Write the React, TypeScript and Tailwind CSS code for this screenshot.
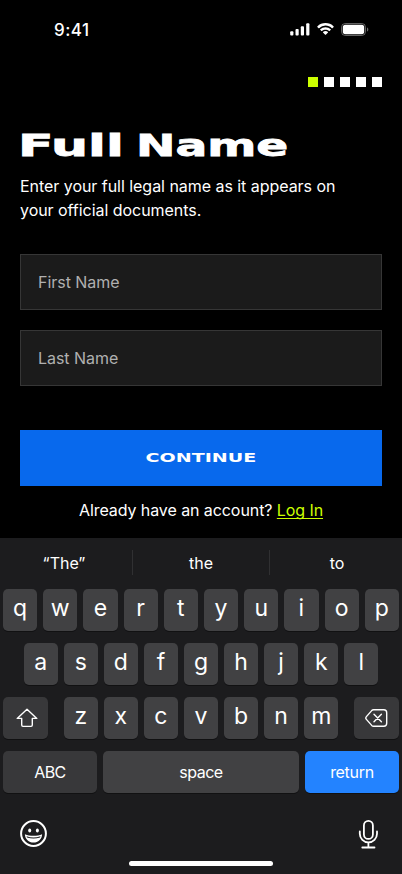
import type { ReactNode } from 'react';

const suggestions = ['“The”', 'the', 'to'];
const topRow = ['q', 'w', 'e', 'r', 't', 'y', 'u', 'i', 'o', 'p'];
const middleRow = ['a', 's', 'd', 'f', 'g', 'h', 'j', 'k', 'l'];
const bottomRow = ['z', 'x', 'c', 'v', 'b', 'n', 'm'];

function StatusBar() {
  return (
    <div className="flex h-[59px] items-center justify-between pl-[54px] pr-[33px]">
      <span className="text-[17px] font-[550] leading-[22px] tracking-[0.45px]">9:41</span>
      <div className="flex items-center">
        <svg width="20" height="13" viewBox="0 0 20 13" fill="currentColor">
          <rect x="0.2" y="8.3" width="3.2" height="4.2" rx="0.9" />
          <rect x="5.5" y="6" width="3.2" height="6.5" rx="0.9" />
          <rect x="10.8" y="3.3" width="3.2" height="9.2" rx="0.9" />
          <rect x="16.2" y="0.3" width="3.2" height="12.2" rx="0.9" />
        </svg>
        <svg className="ml-[7px]" width="17" height="13" viewBox="0 0 17 13" fill="currentColor">
          <path d="M8.5 2.6c2.4 0 4.7.9 6.4 2.6.1.1.3.1.5 0l1.3-1.3c.1-.1.1-.4 0-.5a11.8 11.8 0 0 0-16.4 0c-.1.1-.1.4 0 .5l1.3 1.3c.2.1.4.1.5 0a9.3 9.3 0 0 1 6.4-2.6Z" />
          <path d="M8.5 6.7c1.3 0 2.6.5 3.6 1.4.1.1.3.1.5 0l1.2-1.3c.2-.1.2-.4 0-.5a7.8 7.8 0 0 0-10.6 0c-.2.1-.2.4 0 .5l1.2 1.3c.2.1.4.1.5 0 1-.9 2.3-1.4 3.6-1.4Z" />
          <path d="M11 9.5c.1-.1.1-.4 0-.5a4 4 0 0 0-5 0c-.1.1-.1.4 0 .5l2.2 2.2c.2.2.4.2.6 0L11 9.5Z" />
        </svg>
        <svg className="ml-[7px]" width="28" height="13" viewBox="0 0 28 13" fill="none">
          <rect x="0.5" y="0.5" width="24" height="12" rx="3.8" stroke="currentColor" strokeOpacity="0.38" />
          <rect x="1.8" y="1.8" width="21.4" height="9.4" rx="2.6" fill="currentColor" />
          <path d="M26 4.5v4c.8-.3 1.3-1.1 1.3-2s-.5-1.7-1.3-2Z" fill="currentColor" fillOpacity="0.42" />
        </svg>
      </div>
    </div>
  );
}

function StepDots({ total, current }: { total: number; current: number }) {
  return (
    <div className="mt-[18px] flex justify-end gap-1.5 px-5">
      {Array.from({ length: total }, (_, i) => (
        <span key={i} className={i === current ? 'size-2.5 bg-[#ccff00]' : 'size-2.5 bg-white'} />
      ))}
    </div>
  );
}

function Field({ label }: { label: string }) {
  return (
    <input
      aria-label={label}
      className="h-14 w-full border border-[#363636] bg-[#1b1b1b] px-[17px] text-base tracking-[-0.04px] text-white outline-none placeholder:text-[#b0b0b0]"
      placeholder={label}
      type="text"
    />
  );
}

function LetterKey({ children }: { children: ReactNode }) {
  return (
    <button className="flex h-[42px] w-[34.2px] shrink-0 justify-center rounded-[5px] bg-[#414143] text-[23px] leading-[38px] shadow-[0_1px_0_#111112]">
      {children}
    </button>
  );
}

function Keyboard() {
  return (
    <div className="flex h-[336px] flex-col bg-[#1c1c1e]">
      <div className="flex h-[51px] items-center pb-[3px] text-base">
        {suggestions.map((word, i) => (
          <div
            key={word}
            className={
              i === 0
                ? 'flex h-[25px] w-[132px] items-center justify-center pr-1'
                : i === 1
                  ? 'flex h-[25px] w-[138px] items-center justify-center border-x border-[#303032]'
                  : 'flex h-[25px] flex-1 items-center justify-center pl-0.5'
            }
          >
            <span className="relative top-px">{word}</span>
          </div>
        ))}
      </div>

      <div className="flex flex-col gap-3 px-[3px]">
        <div className="flex justify-between">
          {topRow.map((k) => <LetterKey key={k}>{k}</LetterKey>)}
        </div>
        <div className="flex justify-center gap-[5.9px]">
          {middleRow.map((k) => <LetterKey key={k}>{k}</LetterKey>)}
        </div>
        <div className="flex justify-between">
          <button aria-label="Shift" className="flex h-[42px] w-[45px] items-center justify-center rounded-[5px] bg-[#38383a] shadow-[0_1px_0_#111112]">
            <svg className="ml-0.5" width="22" height="20" viewBox="0 0 22 20" fill="none" stroke="currentColor" strokeWidth="1.4" strokeLinejoin="round">
              <path d="M11 1.2 1.2 10.4h4.5v6.7c0 .9.4 1.3 1.3 1.3h8c.9 0 1.3-.4 1.3-1.3v-6.7h4.5L11 1.2Z" />
            </svg>
          </button>
          <div className="flex gap-[5.9px]">
            {bottomRow.map((k) => <LetterKey key={k}>{k}</LetterKey>)}
          </div>
          <button aria-label="Delete" className="flex h-[42px] w-[45px] items-center justify-center rounded-[5px] bg-[#38383a] shadow-[0_1px_0_#111112]">
            <svg width="23" height="18" viewBox="0 0 23 18" fill="none" stroke="currentColor" strokeWidth="1.4" strokeLinecap="round" strokeLinejoin="round">
              <path d="M8.6.8h10.2c1.9 0 2.9 1 2.9 2.9v10.6c0 1.9-1 2.9-2.9 2.9H8.6c-.8 0-1.4-.3-1.9-.8l-5.3-6c-.7-.8-.7-2 0-2.8l5.3-6C7.2 1.1 7.8.8 8.6.8Z" />
              <path d="m9 5.2 7.4 7.6m0-7.6L9 12.8" />
            </svg>
          </button>
        </div>
        <div className="flex justify-between text-base">
          <button className="h-[42px] w-[94px] rounded-[5px] bg-[#38383a] tracking-[-0.6px] shadow-[0_1px_0_#111112]">ABC</button>
          <button className="h-[42px] w-[195.4px] rounded-[5px] bg-[#414143] tracking-[-0.5px] shadow-[0_1px_0_#111112]">space</button>
          <button className="h-[42px] w-[94px] rounded-[5px] bg-[#2383ff] tracking-[-0.3px] shadow-[0_1px_0_#111112]">return</button>
        </div>
      </div>

      <div className="mt-[26px] flex items-start justify-between pl-5 pr-6">
        <svg width="27" height="28" viewBox="0 0 27 28" fill="none">
          <circle cx="13.5" cy="14.5" r="12.4" stroke="currentColor" strokeWidth="2" />
          <ellipse cx="9.7" cy="11.5" rx="1.5" ry="2" fill="currentColor" />
          <ellipse cx="17.4" cy="11.5" rx="1.5" ry="2" fill="currentColor" />
          <path d="M4.9 15.2c.2 5 3.9 8.3 8.6 8.3s8.4-3.3 8.6-8.3c-2.6 1-5.4 1.5-8.6 1.5s-6-.5-8.6-1.5Z" fill="currentColor" />
          <path d="M6.5 17.2c4.4 1.6 9.6 1.6 14 0l-.5 1.3c-4.1 1.2-8.9 1.2-13 0l-.5-1.3Z" fill="#1c1c1e" />
        </svg>
        <svg width="20" height="30" viewBox="0 0 20 30" fill="none" stroke="currentColor" strokeWidth="1.8" strokeLinecap="round">
          <rect x="5.9" y="1.9" width="9" height="18" rx="4.5" />
          <path d="M1.8 12.5v2.200a8.600 8.600 0 0 0 17.200 0v-2.200M10.400 23.500v4.700M4.300 28.500h12.200" />
        </svg>
      </div>
      <div className="mx-auto mb-2 mt-auto h-[5px] w-36 rounded-full bg-white" />
    </div>
  );
}

export default function App() {
  return (
    <main className="flex h-[874px] w-[402px] flex-col overflow-hidden bg-black font-['Inter',sans-serif] text-white antialiased">
      <StatusBar />
      <StepDots total={5} current={0} />

      <section className="px-5 pt-[38px]">
        <h1 className="-ml-[2px] flex h-10 whitespace-pre font-['DejaVu_Sans',sans-serif] text-[31px] font-bold leading-10 [-webkit-text-stroke:0.8px_white]">
          <span className="w-[118px] origin-left scale-x-[1.68]">Full </span>
          <span className="origin-left scale-x-[1.52]">Name</span>
        </h1>
        <p className="mt-[9px] text-base leading-6 tracking-[-0.04px]">
          Enter your full legal name as it appears on
          <br />
          your official documents.
        </p>
      </section>

      <form className="mt-8 flex flex-col px-5">
        <div className="flex flex-col gap-5">
          <Field label="First Name" />
          <Field label="Last Name" />
        </div>
        <button className="mt-11 h-14 bg-[#0869ed] pb-1" type="button">
          <span className="inline-block scale-x-[1.59] font-['DejaVu_Sans',sans-serif] text-[12px] font-bold">CONTINUE</span>
        </button>
        <p className="mt-3 text-center text-base leading-6 tracking-[-0.08px]">
          Already have an account? <a className="text-[#ccff00] underline decoration-1 underline-offset-2 [text-decoration-skip-ink:none]" href="#">Log In</a>
        </p>
      </form>

      <div className="mt-auto">
        <Keyboard />
      </div>
    </main>
  );
}
